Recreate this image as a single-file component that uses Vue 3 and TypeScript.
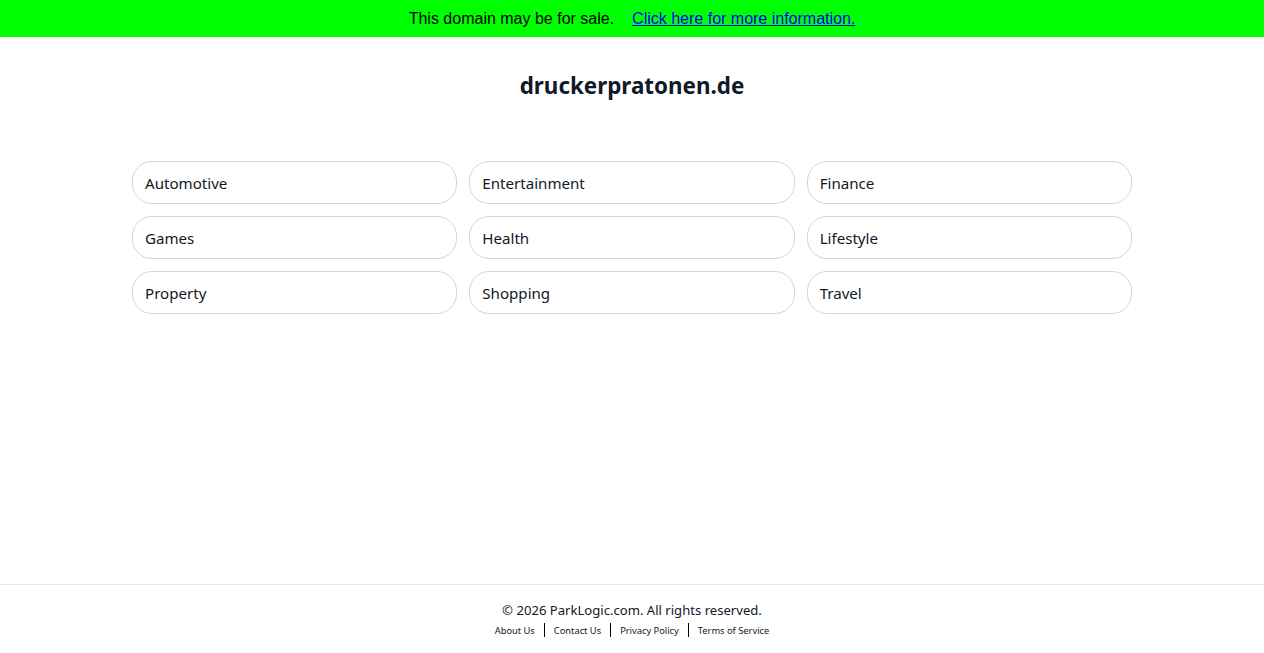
<script setup lang="ts">
const categories = ['Automotive', 'Entertainment', 'Finance', 'Games', 'Health', 'Lifestyle', 'Property', 'Shopping', 'Travel']
const footerLinks = ['About Us', 'Contact Us', 'Privacy Policy', 'Terms of Service']
</script>

<template>
  <div class="page">
    <div class="sale-bar">
      <span class="sale-bar__text">This domain may be for sale.</span>
      <a class="sale-bar__link" href="#">Click here for more information.</a>
    </div>
    <main class="main">
      <h1 class="title">druckerpratonen.de</h1>
      <div class="grid">
        <a v-for="c in categories" :key="c" class="pill" href="#">{{ c }}</a>
      </div>
    </main>
    <footer class="footer">
      <div class="footer__copy">© 2026 ParkLogic.com. All rights reserved.</div>
      <div class="footer__links">
        <a v-for="l in footerLinks" :key="l" class="footer__link" href="#">{{ l }}</a>
      </div>
    </footer>
  </div>
</template>

<style>
body {
  margin: 0;
  background: #fff;
}
</style>

<style scoped>
.page {
  height: 653px;
  display: flex;
  flex-direction: column;
  overflow: hidden;
  font-family: "Noto Sans", sans-serif;
  color: #111827;
}

.sale-bar {
  height: 37px;
  flex: none;
  background: #00ff00;
  display: flex;
  justify-content: center;
  align-items: center;
  gap: 18px;
  font-family: "Liberation Sans", Arial, sans-serif;
  font-size: 16px;
  color: #000;
}

.sale-bar__link {
  color: #0000ee;
  text-decoration: underline;
}

.main {
  flex: 1;
  padding: 0 132px;
}

.title {
  margin: 33px 0 0;
  font-size: 22.4px;
  line-height: 32px;
  font-weight: 700;
  text-align: center;
}

.grid {
  margin-top: 59px;
  display: grid;
  grid-template-columns: repeat(3, minmax(0, 1fr));
  gap: 12px;
}

.pill {
  height: 43px;
  box-sizing: border-box;
  padding: 0 12px;
  display: flex;
  align-items: center;
  border: 1px solid #d1d5db;
  border-radius: 20px;
  font-size: 15.1px;
  color: #111827;
  text-decoration: none;
}

.footer {
  flex: none;
  height: 69px;
  box-sizing: border-box;
  border-top: 1px solid #e5e7eb;
  padding-top: 15px;
  text-align: center;
}

.footer__copy {
  font-size: 13.1px;
  line-height: 20px;
}

.footer__links {
  display: flex;
  justify-content: center;
  margin-top: 3px;
}

.footer__link {
  height: 14px;
  padding: 0 9px;
  font-size: 9.3px;
  line-height: 16px;
  color: #111827;
  text-decoration: none;
  border-left: 1px solid #000;
}

.footer__link:first-child {
  border-left: 0;
}
</style>
